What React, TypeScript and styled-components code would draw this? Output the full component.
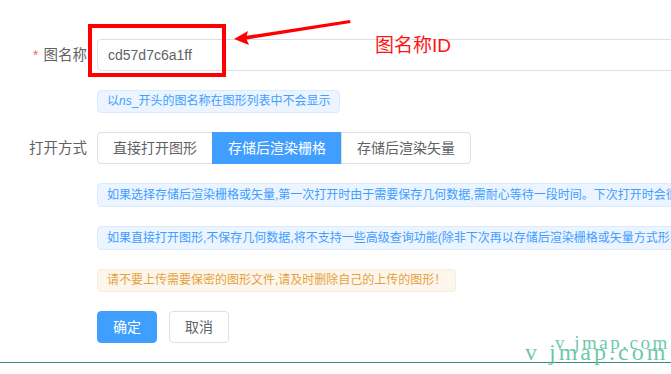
import React from "react";
import styled, { createGlobalStyle } from "styled-components";

const Global = createGlobalStyle`
  html, body { margin: 0; padding: 0; background: #fff; overflow: hidden; }
  body { font-family: "Liberation Sans", "Noto Sans CJK SC", sans-serif; }
  * { box-sizing: border-box; }
`;

const Page = styled.div`
  position: relative;
  width: 671px;
  height: 374px;
  overflow: hidden;
  padding-top: 39px;
`;

const Form = styled.div`
  display: flex;
  flex-direction: column;
  gap: 19px;
`;

const FormItem = styled.div`
  display: flex;
  align-items: flex-start;
`;

const Label = styled.div<{ $required?: boolean }>`
  width: 97px;
  flex: none;
  padding-right: 10px;
  height: 32px;
  line-height: 32px;
  text-align: right;
  font-size: 14.5px;
  color: #606266;
  white-space: nowrap;
  &::before {
    content: ${(p) => (p.$required ? '"*"' : '""')};
    color: #f56c6c;
    margin-right: ${(p) => (p.$required ? 5 : 0)}px;
  }
`;

const Content = styled.div`
  flex: 1;
  min-width: 0;
  display: flex;
  flex-direction: column;
  align-items: flex-start;
  gap: 19px;
`;

const Input = styled.div`
  width: 640px;
  height: 32px;
  border: 1px solid #dcdfe6;
  border-radius: 4px;
  padding: 0 10px;
  line-height: 30px;
  font-size: 14px;
  color: #606266;
  white-space: nowrap;
`;

const Tag = styled.div<{ $kind?: "info" | "warning"; $h?: number }>`
  display: inline-block;
  height: ${(p) => p.$h ?? 24}px;
  line-height: ${(p) => (p.$h ?? 24) - 2}px;
  padding: 0 9px;
  font-size: 12px;
  border-radius: 4px;
  white-space: nowrap;
  border: 1px solid ${(p) => (p.$kind === "warning" ? "#faecd8" : "#d9ecff")};
  background: ${(p) => (p.$kind === "warning" ? "#fdf6ec" : "#ecf5ff")};
  color: ${(p) => (p.$kind === "warning" ? "#e6a23c" : "#409eff")};
  i { font-style: italic; }
`;

const RadioGroup = styled.div`
  display: flex;
`;

const RadioButton = styled.div<{ $active?: boolean }>`
  height: 32px;
  line-height: 30px;
  padding: 0 15px;
  font-size: 14px;
  border: 1px solid ${(p) => (p.$active ? "#409eff" : "#dcdfe6")};
  background: ${(p) => (p.$active ? "#409eff" : "#fff")};
  color: ${(p) => (p.$active ? "#fff" : "#606266")};
  margin-left: -1px;
  white-space: nowrap;
  &:first-child { border-radius: 4px 0 0 4px; margin-left: 0; }
  &:last-child { border-radius: 0 4px 4px 0; }
`;

const Actions = styled.div`
  display: flex;
  gap: 12px;
`;

const Button = styled.div<{ $primary?: boolean }>`
  height: 32px;
  width: 60px;
  line-height: 30px;
  text-align: center;
  font-size: 14px;
  border-radius: 4px;
  border: 1px solid ${(p) => (p.$primary ? "#409eff" : "#dcdfe6")};
  background: ${(p) => (p.$primary ? "#409eff" : "#fff")};
  color: ${(p) => (p.$primary ? "#fff" : "#606266")};
`;

const Divider = styled.div`
  margin-top: 19px;
  height: 1px;
  background: #3d8a74;
`;

const Highlight = styled.div`
  position: absolute;
  left: 88px;
  top: 24px;
  width: 138px;
  height: 53px;
  border: 4px solid #ff0000;
`;

const Note = styled.div`
  position: absolute;
  left: 375px;
  top: 30px;
  font-size: 19px;
  color: #ff1414;
  white-space: nowrap;
`;

const Arrow = styled.svg`
  position: absolute;
  left: 0;
  top: 0;
`;

const Watermark = styled.div<{ $size: number; $left: number; $top: number; $spacing: number }>`
  position: absolute;
  left: ${(p) => p.$left}px;
  top: ${(p) => p.$top}px;
  font-family: "Liberation Serif", serif;
  font-size: ${(p) => p.$size}px;
  letter-spacing: ${(p) => p.$spacing}px;
  line-height: 1;
  color: rgba(80, 190, 150, 0.85);
  white-space: nowrap;
`;

export default function App() {
  return (
    <Page>
      <Global />
      <Form>
        <FormItem>
          <Label $required>图名称</Label>
          <Content>
            <Input>cd57d7c6a1ff</Input>
            <Tag $h={23}>
              以<i>ns</i>_开头的图名称在图形列表中不会显示
            </Tag>
          </Content>
        </FormItem>
        <FormItem>
          <Label>打开方式</Label>
          <Content>
            <RadioGroup>
              <RadioButton>直接打开图形</RadioButton>
              <RadioButton $active>存储后渲染栅格</RadioButton>
              <RadioButton>存储后渲染矢量</RadioButton>
            </RadioGroup>
            <Tag>
              如果选择存储后渲染栅格或矢量,第一次打开时由于需要保存几何数据,需耐心等待一段时间。下次打开时会很快,且支持高级查询功能
            </Tag>
            <Tag>
              如果直接打开图形,不保存几何数据,将不支持一些高级查询功能(除非下次再以存储后渲染栅格或矢量方式形式打开)
            </Tag>
            <Tag $kind="warning" $h={23}>
              请不要上传需要保密的图形文件,请及时删除自己的上传的图形！
            </Tag>
          </Content>
        </FormItem>
        <FormItem>
          <Label />
          <Actions>
            <Button $primary>确定</Button>
            <Button>取消</Button>
          </Actions>
        </FormItem>
      </Form>
      <Divider />
      <Highlight />
      <Arrow width="671" height="374" viewBox="0 0 671 374">
        <path d="M350 20 L242 36.5 L243.5 40 L350.5 23 Z" fill="#ff0000" />
        <path d="M234 39 L248 31 L246 38 L249 45 Z" fill="#ff0000" />
      </Arrow>
      <Note>图名称ID</Note>
      <Watermark $size={19} $left={555} $top={333} $spacing={2.5}>v jmap.com</Watermark>
      <Watermark $size={24} $left={525} $top={340} $spacing={3}>v jmap.com</Watermark>
    </Page>
  );
}
